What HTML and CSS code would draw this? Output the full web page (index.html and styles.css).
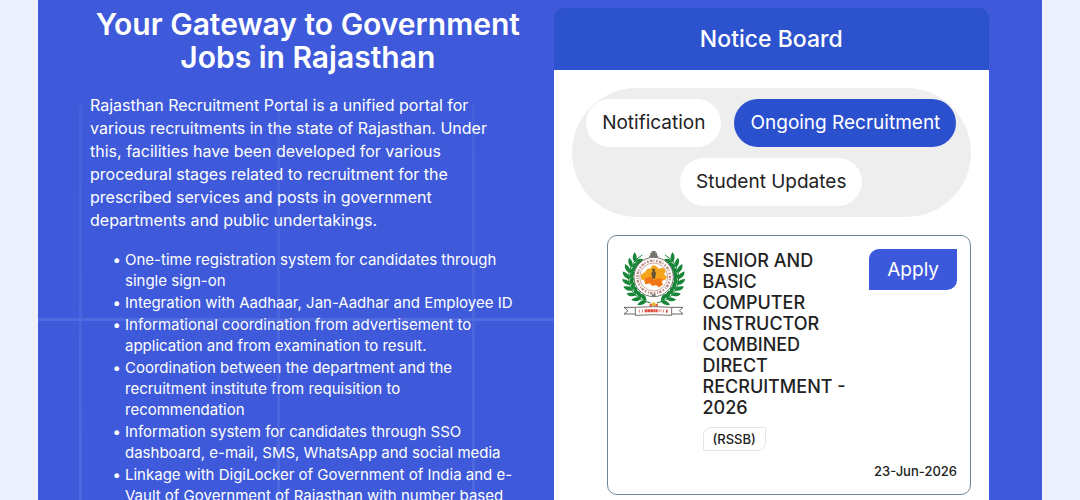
FILE: index.html
```html
<!DOCTYPE html>
<html lang="en">
<head>
<meta charset="utf-8">
<meta name="viewport" content="width=device-width, initial-scale=1">
<title>Rajasthan Recruitment Portal</title>
<link rel="stylesheet" href="styles.css">
</head>
<body>
<main class="hero">
  <section class="intro">
    <h1 class="intro-title">Your Gateway to Government<br>Jobs in Rajasthan</h1>
    <p class="intro-text">Rajasthan Recruitment Portal is a unified portal for<br>various recruitments in the state of Rajasthan. Under<br>this, facilities have been developed for various<br>procedural stages related to recruitment for the<br>prescribed services and posts in government<br>departments and public undertakings.</p>
    <ul class="features">
      <li>One-time registration system for candidates through<br>single sign-on</li>
      <li>Integration with Aadhaar, Jan-Aadhar and Employee ID</li>
      <li>Informational coordination from advertisement to<br>application and from examination to result.</li>
      <li>Coordination between the department and the<br>recruitment institute from requisition to<br>recommendation</li>
      <li>Information system for candidates through SSO<br>dashboard, e-mail, SMS, WhatsApp and social media</li>
      <li>Linkage with DigiLocker of Government of India and e-<br>Vault of Government of Rajasthan with number based</li>
    </ul>
  </section>
  <section class="board">
    <h2 class="board-title">Notice Board</h2>
    <div class="board-body">
      <div class="tabs">
        <button class="tab" type="button">Notification</button>
        <button class="tab tab-active" type="button">Ongoing Recruitment</button>
        <button class="tab" type="button">Student Updates</button>
      </div>
      <article class="notice">
        <svg class="emblem" viewBox="36 24 186 204" role="img" aria-label="RSSB emblem">
          <defs>
            <g id="leaf" fill="#168636">
              <path d="M57 112C43 107 38 97 39 88C52 92 60 101 57 112Z"/>
              <path d="M58 111C55 101 61 92 72 88C76 99 70 107 58 111Z"/>
            </g>
            <g id="branch">
              <path d="M121 185A76 76 0 0 1 97 42" fill="none" stroke="#168636" stroke-width="3"/>
              <use href="#leaf" transform="rotate(-72 131 110)"/>
              <use href="#leaf" transform="rotate(-58 131 110)"/>
              <use href="#leaf" transform="rotate(-44 131 110)"/>
              <use href="#leaf" transform="rotate(-30 131 110)"/>
              <use href="#leaf" transform="rotate(-16 131 110)"/>
              <use href="#leaf" transform="rotate(-2 131 110)"/>
              <use href="#leaf" transform="rotate(12 131 110)"/>
              <use href="#leaf" transform="rotate(26 131 110)"/>
              <use href="#leaf" transform="rotate(40 131 110)"/>
            </g>
            <path id="ring-path" d="M82 108A49 49 0 1 1 180 108A49 49 0 1 1 82 108"/>
          </defs>
          <use href="#branch"/>
          <use href="#branch" transform="translate(262 0) scale(-1 1)"/>
          <circle cx="131" cy="108" r="59" fill="#fff" stroke="#77716f" stroke-width="3"/>
          <use href="#ring-path" fill="none" stroke="#bd8a84" stroke-width="7" stroke-dasharray="5 4 8 3 3 5"/>
          <circle cx="131" cy="108" r="42" fill="#fff" stroke="#b07a72" stroke-width="2"/>
          <path d="M92 101L104 94L112 84L122 82L127 73L138 74L146 83L159 80L168 90L162 100L172 108L165 117L155 118L158 131L147 139L138 132L127 134L119 127L106 130L102 118L93 115Z" fill="#f5a51b"/>
          <path d="M105 112L122 107L132 117L146 112L165 117L155 119L158 131L147 139L138 132L127 134L119 127L106 130Z" fill="#f07618"/>
          <path d="M126 83H136L134 91L138 96L135 113H127L124 96L128 91Z" fill="#665337"/>
          <path d="M121 41V35H125V30H137V35H141V41L146 49H116Z" fill="#77736d"/>
          <path d="M124 160H138L135 167H127Z" fill="#777"/>
          <path d="M119 187L129 192L119 198ZM143 187L133 192L143 198Z" fill="#e64b27"/>
          <circle cx="131" cy="190" r="6" fill="#e8b42d"/>
          <path d="M77 199H42L54 209L42 219H77M184 199H219L208 209L219 219H184" fill="#fff" stroke="#666" stroke-width="3"/>
          <path d="M76 199Q131 195 185 199V223Q131 219 76 223Z" fill="#fff" stroke="#77716d" stroke-width="3"/>
          <path d="M88 211Q131 207 173 211" fill="none" stroke="#dc493f" stroke-width="9" stroke-dasharray="2 6 2 6 7 1 8 1 9 1 6 1 5 3 2 4"/>
        </svg>
        <div class="notice-info">
          <h3 class="notice-title">SENIOR AND<br>BASIC<br>COMPUTER<br>INSTRUCTOR<br>COMBINED<br>DIRECT<br>RECRUITMENT -<br>2026</h3>
          <span class="agency">(RSSB)</span>
        </div>
        <button class="apply" type="button">Apply</button>
        <time class="date" datetime="2026-06-23">23-Jun-2026</time>
      </article>
    </div>
  </section>
</main>
</body>
</html>
```
FILE: styles.css
```css
* { box-sizing: border-box; }

body {
  margin: 0;
  background: #edf0ff;
  font-family: Inter, "Open Sans", sans-serif;
}

.hero {
  display: grid;
  grid-template-columns: 1fr 1fr;
  gap: 28px;
  height: 100vh;
  margin: 0 38px;
  padding: 8px 53px 0 52px;
  overflow: hidden;
  color: #fff;
  background:
    linear-gradient(#506ae0, #506ae0) 0 318px / 516px 3px no-repeat,
    linear-gradient(#4761dc, #5069df) 41px 105px / 3px 100% no-repeat,
    linear-gradient(#4761dc, #5069df) 239px 105px / 3px 100% no-repeat,
    linear-gradient(#4761dc, #5069df) 434px 105px / 3px 100% no-repeat,
    #3e5ada;
}

.intro { white-space: nowrap; }

.intro-title {
  margin: 0 0 20px;
  font-size: 30px;
  font-weight: 600;
  line-height: 33px;
  text-align: center;
}

.intro-text {
  margin: 0 0 17px;
  font-size: 16px;
  line-height: 23px;
}

.features {
  margin: 0;
  padding-left: 35px;
  font-size: 15px;
  line-height: 21px;
  list-style-type: "•\00a0";
}

.features li { margin-bottom: 1px; }

.board-title {
  margin: 0;
  padding: 16px;
  border-radius: 10px 10px 0 0;
  background: #2c52cd;
  font-size: 23px;
  font-weight: 500;
  line-height: 30px;
  text-align: center;
}

.board-body {
  min-height: 100%;
  padding: 18px;
  background: #fff;
}

.tabs {
  display: flex;
  flex-wrap: wrap;
  justify-content: center;
  gap: 11px 13px;
  padding: 11px;
  border-radius: 65px;
  background: #eee;
}

.tab {
  padding: 12px 16px;
  border: 0;
  border-radius: 24px;
  background: #fff;
  color: #222;
  font-family: inherit;
  font-size: 19px;
  line-height: 24px;
  white-space: nowrap;
}

.tab-active {
  background: #2b50ce;
  color: #fff;
}

.notice {
  display: grid;
  grid-template-columns: 64px 1fr auto;
  column-gap: 18px;
  margin: 18px 0 0 35px;
  padding: 13px;
  border: 1px solid #718696;
  border-radius: 10px;
  color: #222;
}

.emblem {
  width: 64px;
  height: 68px;
}

.notice-title {
  margin: 0 0 9px;
  padding-top: 1px;
  font-size: 18px;
  font-weight: 500;
  line-height: 21px;
  white-space: nowrap;
}

.agency {
  display: inline-block;
  padding: 2px 9px;
  border: 1px solid #e5e5e5;
  border-radius: 8px 0;
  font-size: 13px;
  font-weight: 500;
  line-height: 18px;
}

.apply {
  align-self: start;
  padding: 8px 18px;
  border: 0;
  border-radius: 10px 0;
  background: #3c59dc;
  color: #fff;
  font-family: inherit;
  font-size: 19px;
  line-height: 25px;
}

.date {
  grid-column: 1 / -1;
  margin-top: 10px;
  font-size: 13px;
  font-weight: 500;
  line-height: 20px;
  text-align: right;
}
```
